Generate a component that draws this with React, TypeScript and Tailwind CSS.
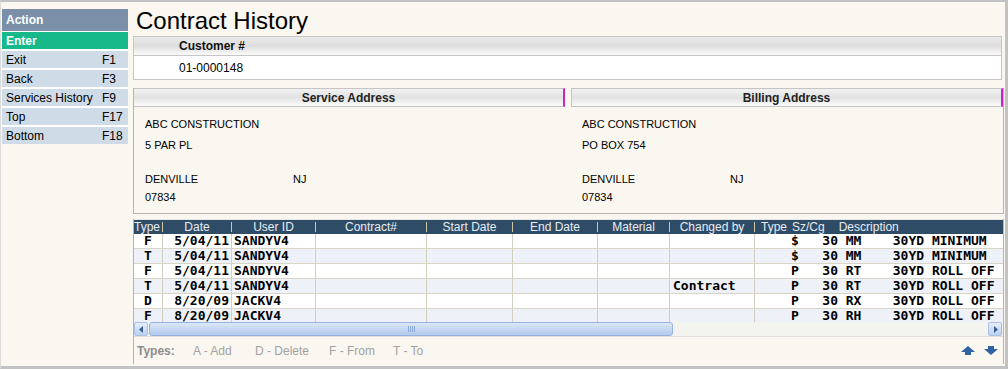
import React from 'react';

const sans = "font-['Liberation_Sans',Arial,sans-serif]";
const mono = "font-['DejaVu_Sans_Mono',monospace]";

const menuItems = [
  { label: 'Exit', key: 'F1' },
  { label: 'Back', key: 'F3' },
  { label: 'Services History', key: 'F9' },
  { label: 'Top', key: 'F17' },
  { label: 'Bottom', key: 'F18' },
];

const rows = [
  { type: 'F', date: '5/04/11', user: 'SANDYV4', by: '', rest: '$   30 MM    30YD MINIMUM' },
  { type: 'T', date: '5/04/11', user: 'SANDYV4', by: '', rest: '$   30 MM    30YD MINIMUM' },
  { type: 'F', date: '5/04/11', user: 'SANDYV4', by: '', rest: 'P   30 RT    30YD ROLL OFF' },
  { type: 'T', date: '5/04/11', user: 'SANDYV4', by: 'Contract', rest: 'P   30 RT    30YD ROLL OFF' },
  { type: 'D', date: '8/20/09', user: 'JACKV4', by: '', rest: 'P   30 RX    30YD ROLL OFF' },
  { type: 'F', date: '8/20/09', user: 'JACKV4', by: '', rest: 'P   30 RH    30YD ROLL OFF' },
];

const headers = ['Type', 'Date', 'User ID', 'Contract#', 'Start Date', 'End Date', 'Material', 'Changed by'];

const gridCols = 'grid grid-cols-[29px_69px_84px_111px_86px_85px_72px_85px_1fr]';

const Address = ({ name, street }: { name: string; street: string }) => (
  <div className="pl-[11px] pt-[8px] text-[11px] text-black">
    <div className="h-[18px] leading-[18px]">{name}</div>
    <div className="mt-[3px] h-[18px] leading-[18px]">{street}</div>
    <div className="mt-[16px] flex h-[18px] leading-[18px]">
      <span className="w-[148px]">DENVILLE</span>
      <span>NJ</span>
    </div>
    <div className="h-[18px] leading-[18px]">07834</div>
  </div>
);

const Arrow = ({ down }: { down?: boolean }) => (
  <svg width="14" height="9" viewBox="0 0 14 9" className={down ? 'rotate-180' : ''}>
    <path d="M7 0 L14 6 L10 6 L10 9 L4 9 L4 6 L0 6 Z" fill="#2f62a3" />
  </svg>
);

export default function App() {
  return (
    <div className={`${sans} flex h-[369px] w-[1008px] overflow-hidden border-t-2 border-b-[3px] border-r-[3px] border-l border-[#c2c2c2] border-l-[#dcdcdc] bg-[#faf6f0]`}>
      {/* Action sidebar */}
      <div className="ml-[1px] mt-[7px] w-[126px] shrink-0">
        <div className="flex flex-col gap-[2px] bg-white">
          <div className="flex h-[22px] items-center bg-[#7b90a8] pl-[4px] text-[12px] font-bold text-white">Action</div>
          <div className="-mt-[1px] flex h-[17px] items-center bg-[#17b98b] pl-[4px] text-[12px] font-bold text-white">Enter</div>
          {menuItems.map((m) => (
            <div key={m.key} className="flex h-[17px] items-center justify-between bg-[#cfdbe6] pl-[4px] pr-[4px] text-[12px] text-black">
              <span>{m.label}</span>
              <span className="w-[22px]">{m.key}</span>
            </div>
          ))}
        </div>
      </div>

      {/* Main */}
      <div className="ml-[5px] flex w-[871px] flex-col">
        <div className="mt-[4px] h-[30px] pl-[3px] text-[24px] leading-[30px] text-black">Contract History</div>

        {/* Customer */}
        <div className="w-[869px] border border-[#c6c6c6] bg-white">
          <div className="flex h-[19px] items-center border-b border-[#c6c6c6] bg-gradient-to-b from-[#eaeaea] via-[#dedede] to-[#fafafa] pl-[45px] text-[12px] font-bold text-[#111]">
            Customer #
          </div>
          <div className="flex h-[23px] items-center pl-[45px] text-[12px] text-black">01-0000148</div>
        </div>

        {/* Addresses */}
        <div className="mt-[8px] h-[126px] border-b border-l border-r border-[#b4b4b4]">
          <div className="flex">
            <div className="flex-1">
              <div className="flex h-[19px] items-center justify-center border-t border-b border-[#c4c4c4] border-r-2 border-r-[#d020c8] bg-gradient-to-b from-[#f2f2f2] via-[#e2e2e2] to-[#fbfbfb] text-[12px] font-bold text-[#222]">
                Service Address
              </div>
              <Address name="ABC CONSTRUCTION" street="5 PAR PL" />
            </div>
            <div className="w-[438px] pl-[6px]">
              <div className="flex h-[19px] items-center justify-center border-t border-b border-l border-[#c4c4c4] border-r-2 border-r-[#d020c8] bg-gradient-to-b from-[#f2f2f2] via-[#e2e2e2] to-[#fbfbfb] text-[12px] font-bold text-[#222]">
                Billing Address
              </div>
              <Address name="ABC CONSTRUCTION" street="PO BOX 754" />
            </div>
          </div>
        </div>

        {/* Contract table */}
        <div className="mt-[5px] flex w-[871px] flex-col border-l border-r border-[#b4b4b4]">
          <div className="h-[103px] overflow-hidden bg-white">
            <div className={`${gridCols} h-[15px] border-t border-[#e6e6e6] bg-[#2f4c67] text-[12px] text-[#e8edf3]`}>
              {headers.map((h, i) => (
                <div key={h} className="flex items-center">
                  <span className={i === 0 ? 'flex-1 leading-none' : 'flex-1 text-center leading-none'}>{h}</span>
                  <span className="h-[10px] w-px bg-[#cdc5a6]" />
                </div>
              ))}
              <div className="flex items-center whitespace-nowrap leading-none">
                <span className="ml-[6px]">Type</span>
                <span className="ml-[5px]">Sz/Cg</span>
                <span className="ml-[14px]">Description</span>
              </div>
            </div>
            {rows.map((r, i) => (
              <div
                key={i}
                className={`${gridCols} ${mono} h-[15px] border-b border-[#d9d5c6] text-[13px] font-bold leading-[14px] text-black ${i % 2 === 1 ? 'bg-[#eef2f8]' : 'bg-white'}`}
              >
                <div className="border-r border-[#d3cfbe] text-center">{r.type}</div>
                <div className="border-r border-[#d3cfbe] pr-[2px] text-right">{r.date}</div>
                <div className="border-r border-[#d3cfbe] pl-[2px]">{r.user}</div>
                <div className="border-r border-[#d3cfbe]" />
                <div className="border-r border-[#d3cfbe]" />
                <div className="border-r border-[#d3cfbe]" />
                <div className="border-r border-[#d3cfbe]" />
                <div className="border-r border-[#d3cfbe] pl-[3px]">{r.by}</div>
                <div className="whitespace-pre pl-[36px]">{r.rest}</div>
              </div>
            ))}
          </div>

          {/* Horizontal scrollbar */}
          <div className="flex h-[14px] items-stretch bg-[#f3f3f0]">
            <div className="flex w-[14px] items-center justify-center rounded-[2px] border border-[#a9c0e4] bg-gradient-to-b from-[#e6effb] to-[#bcd1ef]">
              <svg width="5" height="7" viewBox="0 0 5 7">
                <path d="M4 0 L0 3.5 L4 7 Z" fill="#3b5f92" />
              </svg>
            </div>
            <div className="ml-px flex w-[524px] items-center justify-center rounded-[3px] border border-[#96b3df] bg-gradient-to-b from-[#dce8f8] via-[#c5d8f3] to-[#b3caec]">
              <div className="flex gap-[1px]">
                <span className="h-[6px] w-px bg-[#8eaad6]" />
                <span className="h-[6px] w-px bg-[#8eaad6]" />
                <span className="h-[6px] w-px bg-[#8eaad6]" />
                <span className="h-[6px] w-px bg-[#8eaad6]" />
              </div>
            </div>
            <div className="flex-1" />
            <div className="mr-px flex w-[14px] items-center justify-center rounded-[2px] border border-[#a9c0e4] bg-gradient-to-b from-[#e6effb] to-[#bcd1ef]">
              <svg width="5" height="7" viewBox="0 0 5 7">
                <path d="M1 0 L5 3.5 L1 7 Z" fill="#3b5f92" />
              </svg>
            </div>
          </div>

          {/* Footer legend */}
          <div className="flex h-[28px] items-center border-t border-[#dedede] pl-[3px] pr-[5px] text-[12px]">
            <span className="w-[56px] font-bold text-[#8c8c8c]">Types:</span>
            <span className="w-[62px] text-[#a2a2a2]">A - Add</span>
            <span className="w-[74px] text-[#a2a2a2]">D - Delete</span>
            <span className="w-[64px] text-[#a2a2a2]">F - From</span>
            <span className="text-[#a2a2a2]">T - To</span>
            <div className="ml-auto flex items-center gap-[9px]">
              <Arrow />
              <Arrow down />
            </div>
          </div>
        </div>
      </div>
    </div>
  );
}
